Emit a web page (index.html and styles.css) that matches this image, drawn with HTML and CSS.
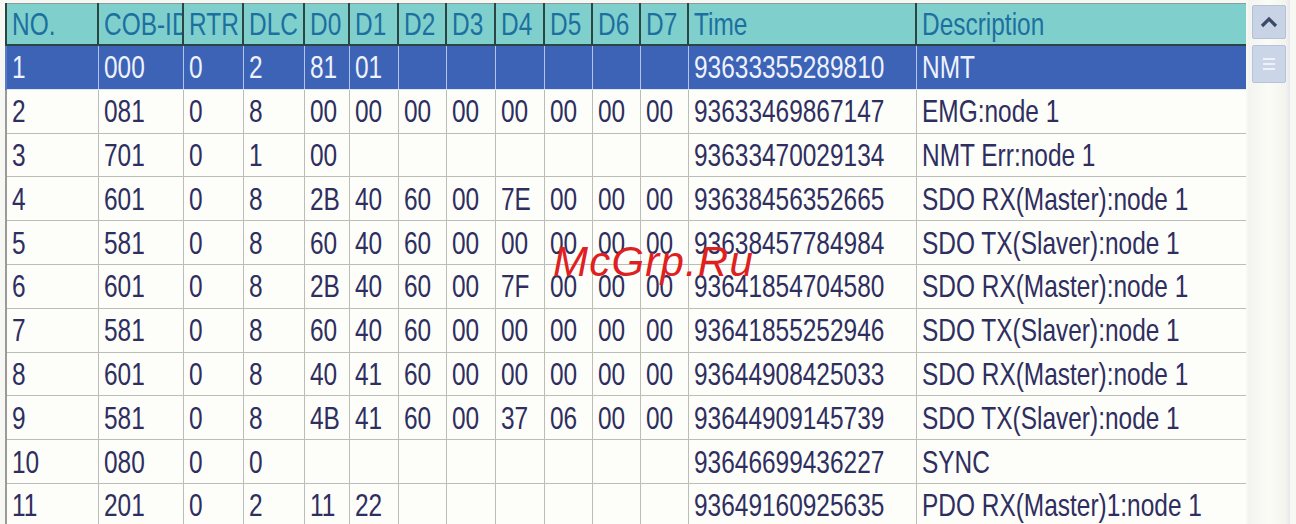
FILE: index.html
```html
<!DOCTYPE html>
<html>
<head>
<meta charset="utf-8">
<link rel="stylesheet" href="styles.css">
</head>
<body>
<div class="frame">
  <div class="grid-wrap">
    <table class="grid">
      <colgroup>
        <col class="c-no"><col class="c-cob"><col class="c-rtr"><col class="c-dlc">
        <col class="c-d0"><col class="c-d1"><col class="c-d2"><col class="c-d3">
        <col class="c-d4"><col class="c-d5"><col class="c-d6"><col class="c-d7">
        <col class="c-time"><col class="c-desc">
      </colgroup>
      <thead>
        <tr><th><span>NO.</span></th><th><span>COB-ID</span></th><th><span>RTR</span></th><th><span>DLC</span></th><th><span>D0</span></th><th><span>D1</span></th><th><span>D2</span></th><th><span>D3</span></th><th><span>D4</span></th><th><span>D5</span></th><th><span>D6</span></th><th><span>D7</span></th><th><span>Time</span></th><th><span>Description</span></th></tr>
      </thead>
      <tbody>
        <tr class="sel"><td><span>1</span></td><td><span>000</span></td><td><span>0</span></td><td><span>2</span></td><td><span>81</span></td><td><span>01</span></td><td></td><td></td><td></td><td></td><td></td><td></td><td><span>93633355289810</span></td><td><span>NMT</span></td></tr>
        <tr><td><span>2</span></td><td><span>081</span></td><td><span>0</span></td><td><span>8</span></td><td><span>00</span></td><td><span>00</span></td><td><span>00</span></td><td><span>00</span></td><td><span>00</span></td><td><span>00</span></td><td><span>00</span></td><td><span>00</span></td><td><span>93633469867147</span></td><td><span>EMG:node 1</span></td></tr>
        <tr><td><span>3</span></td><td><span>701</span></td><td><span>0</span></td><td><span>1</span></td><td><span>00</span></td><td></td><td></td><td></td><td></td><td></td><td></td><td></td><td><span>93633470029134</span></td><td><span>NMT Err:node 1</span></td></tr>
        <tr><td><span>4</span></td><td><span>601</span></td><td><span>0</span></td><td><span>8</span></td><td><span>2B</span></td><td><span>40</span></td><td><span>60</span></td><td><span>00</span></td><td><span>7E</span></td><td><span>00</span></td><td><span>00</span></td><td><span>00</span></td><td><span>93638456352665</span></td><td><span>SDO RX(Master):node 1</span></td></tr>
        <tr><td><span>5</span></td><td><span>581</span></td><td><span>0</span></td><td><span>8</span></td><td><span>60</span></td><td><span>40</span></td><td><span>60</span></td><td><span>00</span></td><td><span>00</span></td><td><span>00</span></td><td><span>00</span></td><td><span>00</span></td><td><span>93638457784984</span></td><td><span>SDO TX(Slaver):node 1</span></td></tr>
        <tr><td><span>6</span></td><td><span>601</span></td><td><span>0</span></td><td><span>8</span></td><td><span>2B</span></td><td><span>40</span></td><td><span>60</span></td><td><span>00</span></td><td><span>7F</span></td><td><span>00</span></td><td><span>00</span></td><td><span>00</span></td><td><span>93641854704580</span></td><td><span>SDO RX(Master):node 1</span></td></tr>
        <tr><td><span>7</span></td><td><span>581</span></td><td><span>0</span></td><td><span>8</span></td><td><span>60</span></td><td><span>40</span></td><td><span>60</span></td><td><span>00</span></td><td><span>00</span></td><td><span>00</span></td><td><span>00</span></td><td><span>00</span></td><td><span>93641855252946</span></td><td><span>SDO TX(Slaver):node 1</span></td></tr>
        <tr><td><span>8</span></td><td><span>601</span></td><td><span>0</span></td><td><span>8</span></td><td><span>40</span></td><td><span>41</span></td><td><span>60</span></td><td><span>00</span></td><td><span>00</span></td><td><span>00</span></td><td><span>00</span></td><td><span>00</span></td><td><span>93644908425033</span></td><td><span>SDO RX(Master):node 1</span></td></tr>
        <tr><td><span>9</span></td><td><span>581</span></td><td><span>0</span></td><td><span>8</span></td><td><span>4B</span></td><td><span>41</span></td><td><span>60</span></td><td><span>00</span></td><td><span>37</span></td><td><span>06</span></td><td><span>00</span></td><td><span>00</span></td><td><span>93644909145739</span></td><td><span>SDO TX(Slaver):node 1</span></td></tr>
        <tr><td><span>10</span></td><td><span>080</span></td><td><span>0</span></td><td><span>0</span></td><td></td><td></td><td></td><td></td><td></td><td></td><td></td><td></td><td><span>93646699436227</span></td><td><span>SYNC</span></td></tr>
        <tr><td><span>11</span></td><td><span>201</span></td><td><span>0</span></td><td><span>2</span></td><td><span>11</span></td><td><span>22</span></td><td></td><td></td><td></td><td></td><td></td><td></td><td><span>93649160925635</span></td><td><span>PDO RX(Master)1:node 1</span></td></tr>
      </tbody>
    </table>
  </div>
  <div class="scrollbar">
    <div class="sb-btn">
      <svg width="20" height="12" viewBox="0 0 20 12"><path d="M3 10 L10 3 L17 10" fill="none" stroke="#3a4a6a" stroke-width="3.2" stroke-linejoin="miter"/></svg>
    </div>
    <div class="sb-thumb">
      <span class="grip"></span><span class="grip"></span><span class="grip"></span>
    </div>
    <div class="sb-track"></div>
  </div>
</div>
<div class="watermark">McGrp.Ru</div>
</body>
</html>
```

FILE: styles.css
```css
html, body {
  margin: 0;
  padding: 0;
}
body {
  width: 1296px;
  height: 524px;
  overflow: hidden;
  background: #f7f8f3;
  position: relative;
  font-family: "Liberation Sans", Arial, sans-serif;
}
.frame {
  display: flex;
  padding: 3px 0 0 5px;
  height: 521px;
}
.grid-wrap {
  width: 1241px;
  height: 521px;
  overflow: hidden;
  flex: none;
}
.grid {
  border-collapse: collapse;
  table-layout: fixed;
  width: 1241px;
}
.c-no { width: 92px; }
.c-cob { width: 85px; }
.c-rtr { width: 60px; }
.c-dlc { width: 61px; }
.c-d0 { width: 45px; }
.c-d1 { width: 49px; }
.c-d2 { width: 48px; }
.c-d3 { width: 49px; }
.c-d4 { width: 49px; }
.c-d5 { width: 48px; }
.c-d6 { width: 48px; }
.c-d7 { width: 48px; }
.c-time { width: 228px; }
.c-desc { width: 331px; }

.grid th, .grid td {
  white-space: nowrap;
  overflow: hidden;
  text-align: left;
  vertical-align: middle;
  font-weight: normal;
  font-size: 32px;
  line-height: 32px;
  padding: 0 0 0 5px;
}
.grid th span, .grid td span {
  display: inline-block;
  transform: scaleX(0.764);
  transform-origin: 0 50%;
}
.grid th {
  height: 40px;
  background: #7fcfcd;
  color: #1d6fa0;
  border: 2px solid #2b4444;
  border-top: 1px solid #8a9c9c;
  padding-left: 5px;
}
.grid td {
  height: 42.8px;
  color: #2e2e60;
  background: #fdfdf9;
  border: 1px solid #bdbdb8;
}
.grid tbody tr td:first-child {
  border-left: 2px solid #9a9a98;
}
.grid tr.sel td {
  background: #3c63b6;
  color: #eef2ff;
  border-left: 1px solid #b3c5ee;
  border-right: 1px solid #b3c5ee;
  border-bottom: 1px solid #dfe6f6;
}
.grid tr.sel td:first-child {
  border-left: 2px solid #5a7cc4;
}

.scrollbar {
  flex: none;
  width: 42px;
  margin-left: 2px;
  display: flex;
  flex-direction: column;
  align-items: center;
  gap: 6px;
  padding-top: 2px;
  background: linear-gradient(to right, #f3f4ef 0, #fbfcf6 50%, #f3f4ee 90%, #e6e6f0 100%);
  margin-top: -3px;
  height: 524px;
}
.sb-btn {
  width: 32px;
  height: 32px;
  margin-top: 3px;
  background: #c9d3e6;
  border: 1px solid #b4c0d8;
  border-radius: 2px;
  display: flex;
  align-items: center;
  justify-content: center;
}
.sb-thumb {
  width: 32px;
  height: 36px;
  background: #cbd5e8;
  border: 1px solid #b7c3da;
  border-radius: 2px;
  display: flex;
  flex-direction: column;
  align-items: center;
  justify-content: center;
  gap: 3px;
}
.grip {
  display: block;
  width: 12px;
  height: 2px;
  background: #eef2fa;
}
.sb-track {
  flex: 1;
}

.watermark {
  position: absolute;
  left: 553px;
  top: 238px;
  font-family: "Liberation Sans", Arial, sans-serif;
  font-style: italic;
  font-size: 42px;
  line-height: 48px;
  letter-spacing: 1.2px;
  color: #e0201e;
}
```
